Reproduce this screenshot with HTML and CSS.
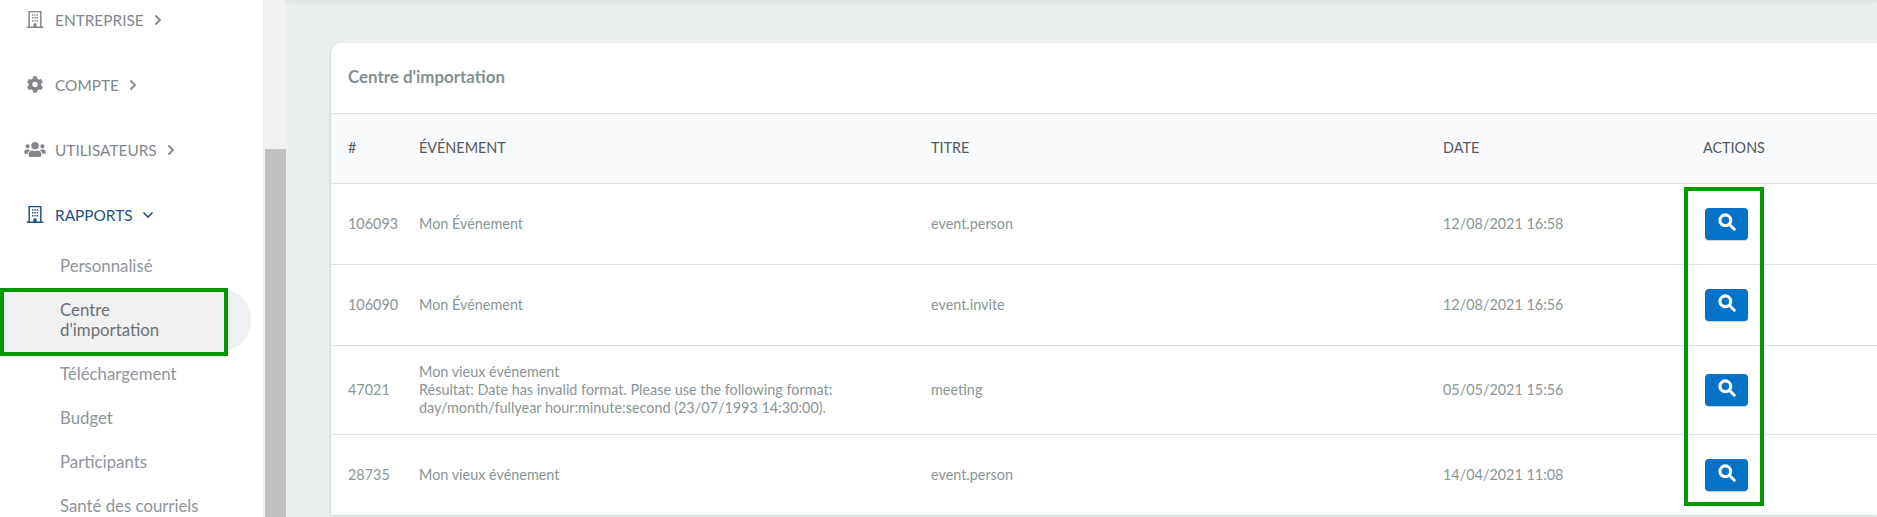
FILE: index.html
```html
<!DOCTYPE html>
<html lang="fr">
<head>
<meta charset="utf-8">
<title>Centre d'importation</title>
<link rel="stylesheet" href="styles.css">
</head>
<body>
<div class="app">
  <aside class="sidebar">
    <nav class="nav">
      <a class="nav-item">
        <svg class="ico" viewBox="0 0 16 16"><path fill="currentColor" fill-rule="evenodd" d="M1.800 0h12.400v14.600h1.600V16H.2v-1.400h1.600zM3.200 1.200v13.400h3.300v-2.800h3v2.800h3.300V1.200zM5.200 3h1.300v1.400H5.200zM7.400 3h1.300v1.400H7.400zM9.600 3h1.300v1.400H9.600zM5.200 5.700h1.300v1.400H5.200zM7.400 5.700h1.300v1.400H7.400zM9.600 5.700h1.300v1.400H9.600zM5.200 8.400h1.300v1.400H5.200zM7.400 8.400h1.300v1.400H7.400zM9.600 8.400h1.300v1.400H9.600z"/></svg>
        <span>ENTREPRISE</span>
        <svg class="chev" viewBox="0 0 8 12"><path d="M1.500 1.500 6 6l-4.500 4.500" fill="none" stroke="currentColor" stroke-width="1.800"/></svg>
      </a>
      <a class="nav-item">
        <svg class="ico" viewBox="0 0 512 512"><path fill="currentColor" d="M487 316l-42-25a191 191 0 0 0 0-70l42-25c5-3 7-8 5-14-11-35-30-67-54-93-4-4-10-5-15-2l-42 24a187 187 0 0 0-61-35V28c0-6-4-10-9-12-36-8-73-8-109 0-6 2-9 6-9 12v48a193 193 0 0 0-61 35L90 87c-5-3-11-2-15 2-24 26-43 58-54 93-2 6 0 11 5 14l42 25a191 191 0 0 0 0 70l-42 25c-5 3-7 8-5 14 11 35 30 67 54 93 4 4 10 5 15 2l42-24a187 187 0 0 0 61 35v48c0 6 4 10 9 12 36 8 73 8 109 0 6-2 9-6 9-12v-48a193 193 0 0 0 61-35l42 24c5 3 11 2 15-2 24-26 43-58 54-93 2-6 0-11-5-14zM256 336a80 80 0 1 1 0-160 80 80 0 0 1 0 160z"/></svg>
        <span>COMPTE</span>
        <svg class="chev" viewBox="0 0 8 12"><path d="M1.500 1.500 6 6l-4.500 4.500" fill="none" stroke="currentColor" stroke-width="1.800"/></svg>
      </a>
      <a class="nav-item">
        <svg class="ico ico-wide" viewBox="0 0 640 512"><path fill="currentColor" d="M96 224a64 64 0 1 0 0-128 64 64 0 0 0 0 128zm448 0a64 64 0 1 0 0-128 64 64 0 0 0 0 128zm32 32h-64c-18 0-34 7-45 19 40 22 69 62 75 109h66c18 0 32-14 32-32v-32c0-35-29-64-64-64zm-256 0a112 112 0 1 0 0-224 112 112 0 0 0 0 224zm77 32h-8a157 157 0 0 1-138 0h-8c-64 0-115 52-115 115v29c0 27 21 48 48 48h288c27 0 48-21 48-48v-29c0-63-51-115-115-115zM173 275c-11-12-27-19-45-19H64c-35 0-64 29-64 64v32c0 18 14 32 32 32h66c6-47 35-87 75-109z"/></svg>
        <span>UTILISATEURS</span>
        <svg class="chev" viewBox="0 0 8 12"><path d="M1.500 1.500 6 6l-4.500 4.500" fill="none" stroke="currentColor" stroke-width="1.800"/></svg>
      </a>
      <a class="nav-item nav-open">
        <svg class="ico" viewBox="0 0 16 16"><path fill="currentColor" fill-rule="evenodd" d="M1.800 0h12.400v14.600h1.600V16H.2v-1.400h1.600zM3.200 1.200v13.400h3.300v-2.800h3v2.800h3.300V1.200zM5.200 3h1.300v1.400H5.200zM7.400 3h1.300v1.400H7.400zM9.600 3h1.300v1.400H9.600zM5.200 5.700h1.300v1.400H5.200zM7.400 5.700h1.300v1.400H7.400zM9.600 5.700h1.300v1.400H9.600zM5.200 8.400h1.300v1.400H5.200zM7.400 8.400h1.300v1.400H7.400zM9.600 8.400h1.300v1.400H9.600z"/></svg>
        <span>RAPPORTS</span>
        <svg class="chev-down" viewBox="0 0 12 8"><path d="M1.500 1.500 6 6l4.500-4.500" fill="none" stroke="currentColor" stroke-width="1.600"/></svg>
      </a>
    </nav>
    <ul class="subnav">
      <li class="sub-item">Personnalisé</li>
      <li class="sub-item sub-active">Centre<br>d'importation</li>
      <li class="sub-item">Téléchargement</li>
      <li class="sub-item">Budget</li>
      <li class="sub-item">Participants</li>
      <li class="sub-item">Santé des courriels</li>
    </ul>
  </aside>
  <div class="scrollbar"><div class="thumb"></div></div>
  <main class="main">
    <div class="topbar"></div>
    <section class="card">
      <h2 class="card-title">Centre d'importation</h2>
      <div class="table">
        <div class="row head">
          <div>#</div><div>ÉVÉNEMENT</div><div>TITRE</div><div>DATE</div><div>ACTIONS</div>
        </div>
        <div class="row r81">
          <div>106093</div><div>Mon Événement</div><div>event.person</div><div>12/08/2021 16:58</div>
          <div><button class="btn" type="button"><svg viewBox="0 0 16 16"><circle cx="6.500" cy="6.500" r="4.800" fill="none" stroke="currentColor" stroke-width="2.800"/><path d="M10.200 10.200l4.300 4.300" stroke="currentColor" stroke-width="2.600" stroke-linecap="round"/></svg></button></div>
        </div>
        <div class="row r81">
          <div>106090</div><div>Mon Événement</div><div>event.invite</div><div>12/08/2021 16:56</div>
          <div><button class="btn" type="button"><svg viewBox="0 0 16 16"><circle cx="6.500" cy="6.500" r="4.800" fill="none" stroke="currentColor" stroke-width="2.800"/><path d="M10.200 10.200l4.300 4.300" stroke="currentColor" stroke-width="2.600" stroke-linecap="round"/></svg></button></div>
        </div>
        <div class="row r89">
          <div>47021</div><div>Mon vieux événement<br>Résultat: Date has invalid format. Please use the following format:<br>day/month/fullyear hour:minute:second (23/07/1993 14:30:00).</div><div>meeting</div><div>05/05/2021 15:56</div>
          <div><button class="btn" type="button"><svg viewBox="0 0 16 16"><circle cx="6.500" cy="6.500" r="4.800" fill="none" stroke="currentColor" stroke-width="2.800"/><path d="M10.200 10.200l4.300 4.300" stroke="currentColor" stroke-width="2.600" stroke-linecap="round"/></svg></button></div>
        </div>
        <div class="row r81 last">
          <div>28735</div><div>Mon vieux événement</div><div>event.person</div><div>14/04/2021 11:08</div>
          <div><button class="btn" type="button"><svg viewBox="0 0 16 16"><circle cx="6.500" cy="6.500" r="4.800" fill="none" stroke="currentColor" stroke-width="2.800"/><path d="M10.200 10.200l4.300 4.300" stroke="currentColor" stroke-width="2.600" stroke-linecap="round"/></svg></button></div>
        </div>
      </div>
    </section>
  </main>
</div>
<div class="mark mark-side"></div>
<div class="mark mark-actions"></div>
</body>
</html>
```

FILE: styles.css
```css
* { box-sizing: border-box; }
html, body { margin: 0; height: 100%; overflow: hidden; }
body { font-family: Lato, "Open Sans", sans-serif; color: #8a9596; background: #ebeff0; position: relative; }
.app { display: flex; height: 517px; overflow: hidden; }

.sidebar { width: 263px; flex: none; background: #fff; overflow: hidden; }
.nav { margin-top: -13px; }
.nav-item { display: flex; align-items: center; height: 65px; padding-left: 24px; font-size: 15.4px; color: #83868b; }
.ico { width: 22px; height: 17px; margin-right: 9px; flex: none; }
.ico-wide { height: 17px; }
.chev { width: 8px; height: 12px; margin-left: 10px; }
.chev-down { width: 12px; height: 8px; margin-left: 9px; }
.nav-open { color: #1d4f87; }

.subnav { list-style: none; margin: -3px 0 0; padding: 0; font-size: 16.8px; line-height: 20px; color: #8f949b; }
.sub-item { padding: 12px 0 12px 60px; width: 251px; }
.sub-active { background: #f0f0f0; color: #6b7178; border-radius: 0 34px 34px 0; padding-right: 60px; }

.scrollbar { width: 23px; flex: none; background: #f1f1f1; padding: 149px 0 0 2px; }
.thumb { width: 21px; height: 368px; background: #c1c1c1; }

.main { flex: 1; min-width: 0; padding-left: 45px; }
.topbar { height: 2px; margin: 0 0 41px -45px; background: #e2e5e6; box-shadow: 0 2px 6px rgba(0, 0, 0, .1); }
.card { background: #fff; border-radius: 10px 0 0 0; height: 472px; box-shadow: -1px 1px 2px rgba(0, 0, 0, .12); overflow: hidden; }
.card-title { margin: 0; height: 70px; padding: 0 0 2px 17px; font-size: 16.9px; font-weight: 700; line-height: 68px; color: #839091; }

.row { display: grid; grid-template-columns: 71px 512px 512px 260px 1fr; align-items: center; padding: 0 0 1px 17px; border-top: 1px solid #dfe2e5; font-size: 14.4px; line-height: 18px; }
.head { height: 70px; background: #f9fafc; color: #54585e; }
.r81 { height: 81px; }
.r89 { height: 89px; }
.btn { display: flex; align-items: center; justify-content: center; width: 43px; height: 32px; margin: 1px 0 0 2px; padding: 0 0 4px; border: 0; border-radius: 4px; background: #0472c7; color: #fff; box-shadow: 0 1px 1px rgba(0, 0, 0, .2); }
.btn svg { width: 18px; height: 18px; }

.mark { position: absolute; border: 4px solid #009900; pointer-events: none; }
.mark-side { left: 0; top: 288px; width: 228px; height: 68px; }
.mark-actions { left: 1684px; top: 187px; width: 80px; height: 319px; }
```
